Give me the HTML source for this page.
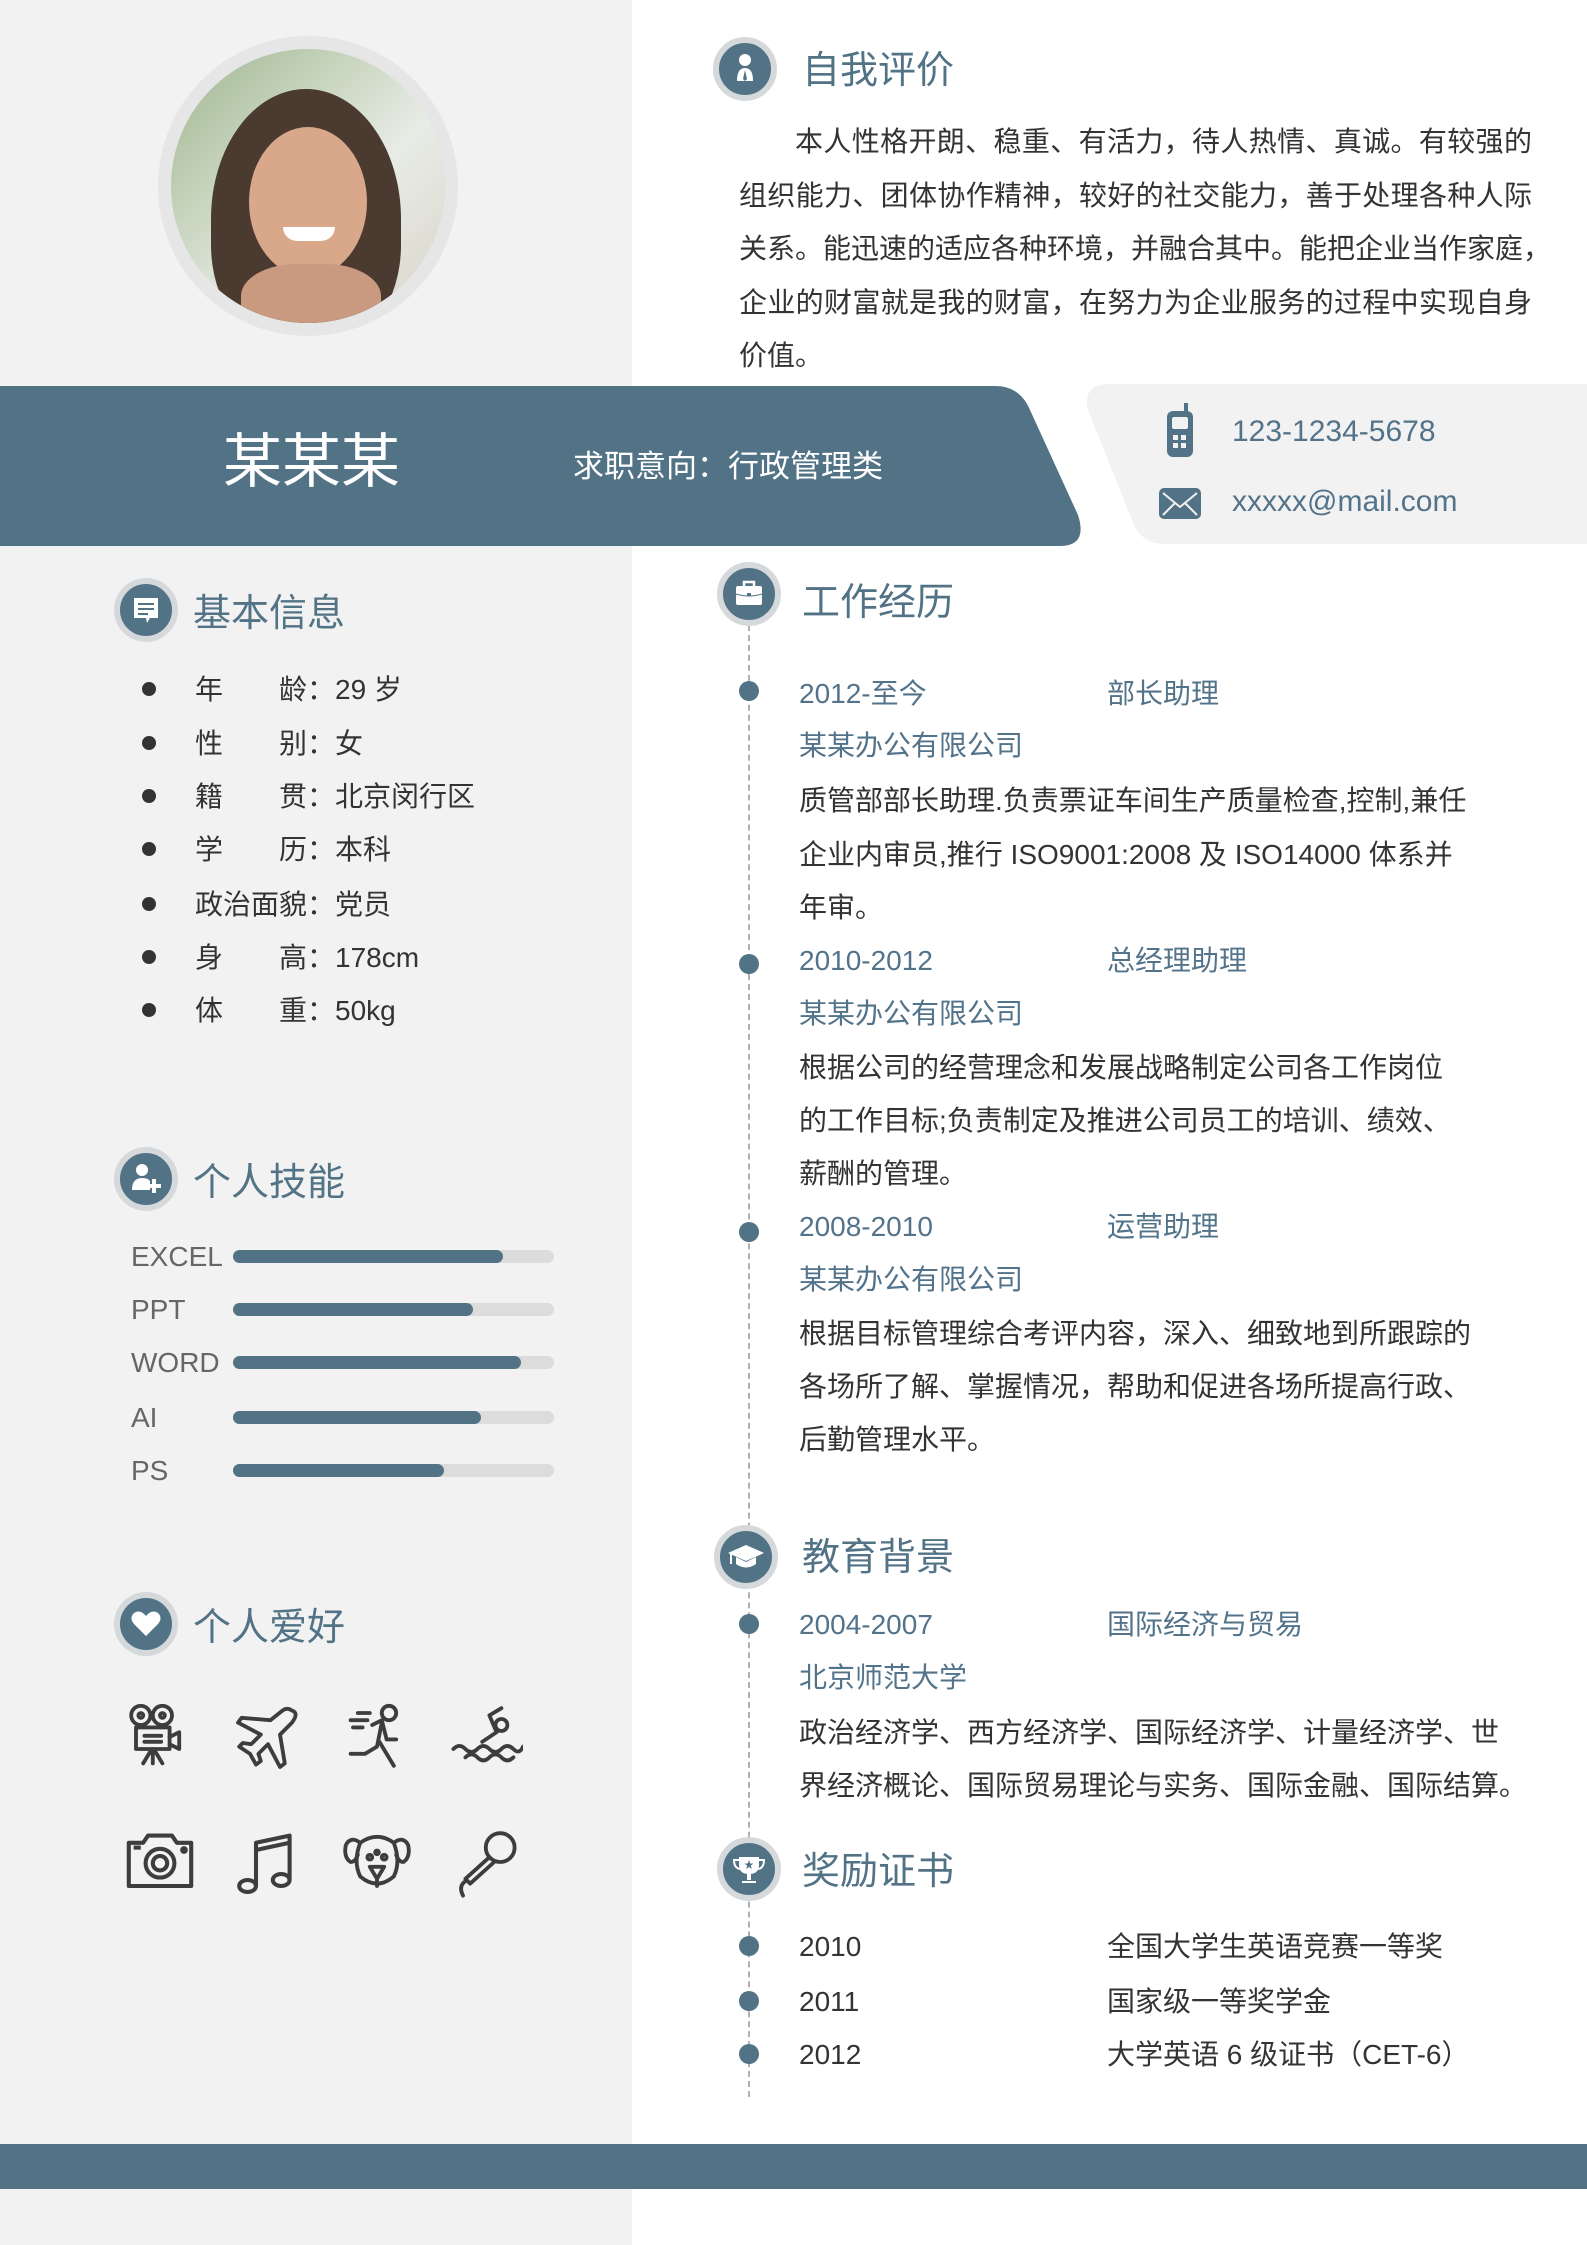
<!DOCTYPE html>
<html><head><meta charset="utf-8">
<style>
*{margin:0;padding:0;box-sizing:border-box}
body{width:1587px;height:2245px;position:relative;background:#fff;font-family:"Liberation Sans","Noto Sans CJK SC",sans-serif;color:#333;overflow:hidden}
.a{position:absolute;white-space:nowrap}
.blue{color:#52738a}
.ttl{font-size:38px;color:#527386;line-height:50px}
.ic{position:absolute;width:64px;height:64px;border-radius:50%;background:#527386;border:6px solid #d6d9db}
.bul{position:absolute;width:14px;height:14px;border-radius:50%;background:#333}
.dot{position:absolute;width:20px;height:20px;border-radius:50%;background:#527386;left:739px}
.t28{font-size:28px;line-height:40px}
.bar{position:absolute;left:233px;width:321px;height:13px;border-radius:7px;background:#dcdcdc}
.bar i{display:block;height:13px;border-radius:7px;background:#527386}
.sk{position:absolute;left:131px;font-size:28px;color:#666;line-height:40px;font-weight:300}
.p{position:absolute;left:739px;width:793px;font-size:28px;line-height:40px;text-align:justify;text-align-last:justify;white-space:nowrap}
.hb{position:absolute;width:72px;height:72px}
</style></head><body>
<div class="a" style="left:0;top:0;width:632px;height:2245px;background:#f2f2f2"></div>

<div class="a" style="left:158px;top:36px;width:300px;height:300px;border-radius:50%;background:#e6e6e6"></div>
<div class="a" style="left:171px;top:49px;width:274px;height:274px;border-radius:50%;overflow:hidden;background:linear-gradient(135deg,#9fb58f 0%,#c9d6c0 35%,#e8ece6 60%,#d8d3c8 100%)">
  <div class="a" style="left:40px;top:40px;width:190px;height:260px;border-radius:50% 50% 40% 40%;background:#4a3a30"></div>
  <div class="a" style="left:78px;top:78px;width:118px;height:150px;border-radius:50%;background:#d9a88a"></div>
  <div class="a" style="left:70px;top:215px;width:140px;height:80px;border-radius:40%;background:#c99a80"></div>
  <div class="a" style="left:112px;top:178px;width:52px;height:14px;border-radius:0 0 20px 20px;background:#fff"></div>
</div>

<div class="ic" style="left:713px;top:37px"><svg width="52" height="52" viewBox="0 0 52 52"><circle cx="26" cy="17" r="6" fill="#fff"/><path d="M18 38 Q18 25 26 25 Q34 25 34 38Z" fill="#fff"/><path d="M26 27 L24 36 L26 38 L28 36Z" fill="#527386"/></svg></div>
<div class="a ttl" style="left:802px;top:46px">自我评价</div>
<div class="p" style="left:795px;width:737px;top:122px">本人性格开朗、稳重、有活力，待人热情、真诚。有较强的</div>
<div class="p" style="top:176px">组织能力、团体协作精神，较好的社交能力，善于处理各种人际</div>
<div class="p" style="top:229px">关系。能迅速的适应各种环境，并融合其中。能把企业当作家庭，</div>
<div class="p" style="top:283px">企业的财富就是我的财富，在努力为企业服务的过程中实现自身</div>
<div class="a t28" style="left:739px;top:336px">价值。</div>

<svg class="a" style="left:0;top:380px" width="1587" height="170" viewBox="0 380 1587 170">
<path d="M0 386 L995 386 Q1020 386 1030 410 L1078 515 Q1088 546 1060 546 L0 546Z" fill="#527386"/>
<path d="M1110 384 L1587 384 L1587 544 L1165 544 Q1140 544 1132 520 L1088 410 Q1082 384 1110 384Z" fill="#f2f2f2"/>
</svg>
<div class="a" style="left:223px;top:424px;font-size:59px;line-height:76px;color:#fff">某某某</div>
<div class="a" style="left:573px;top:447px;font-size:31px;line-height:40px;color:#fff">求职意向：行政管理类</div>
<svg class="a" style="left:1165px;top:403px" width="30" height="54" viewBox="0 0 30 54"><rect x="19" y="0" width="4" height="10" fill="#527386"/><rect x="2" y="8" width="26" height="46" rx="6" fill="#527386"/><rect x="7" y="14" width="16" height="12" rx="2" fill="#f2f2f2"/><rect x="8" y="32" width="5" height="5" fill="#f2f2f2"/><rect x="16" y="32" width="5" height="5" fill="#f2f2f2"/><rect x="8" y="40" width="5" height="5" fill="#f2f2f2"/><rect x="16" y="40" width="5" height="5" fill="#f2f2f2"/></svg>
<div class="a blue" style="left:1232px;top:412px;font-size:30px;line-height:40px">123-1234-5678</div>
<svg class="a" style="left:1159px;top:488px" width="42" height="31" viewBox="0 0 42 31"><rect width="42" height="31" rx="5" fill="#527386"/><path d="M4 5 L21 19 L38 5 M4 27 L16 15 M38 27 L26 15" stroke="#f2f2f2" stroke-width="2" fill="none"/></svg>
<div class="a blue" style="left:1232px;top:482px;font-size:30px;line-height:40px">xxxxx@mail.com</div>

<div class="ic" style="left:114px;top:578px"><svg width="52" height="52" viewBox="0 0 52 52"><path d="M14 14 H38 V34 H30 L27 39 L26 34 H14Z" fill="#fff"/><path d="M18 20H34M18 25H34M18 30H28" stroke="#527386" stroke-width="2"/></svg></div>
<div class="a ttl" style="left:193px;top:589px">基本信息</div>
<div class="bul" style="left:142px;top:682px"></div><div class="a t28" style="left:195px;top:670px">年</div><div class="a t28" style="left:279px;top:670px">龄：29 岁</div>
<div class="bul" style="left:142px;top:736px"></div><div class="a t28" style="left:195px;top:724px">性</div><div class="a t28" style="left:279px;top:724px">别：女</div>
<div class="bul" style="left:142px;top:789px"></div><div class="a t28" style="left:195px;top:777px">籍</div><div class="a t28" style="left:279px;top:777px">贯：北京闵行区</div>
<div class="bul" style="left:142px;top:842px"></div><div class="a t28" style="left:195px;top:830px">学</div><div class="a t28" style="left:279px;top:830px">历：本科</div>
<div class="bul" style="left:142px;top:897px"></div><div class="a t28" style="left:195px;top:885px">政治面貌：党员</div>
<div class="bul" style="left:142px;top:950px"></div><div class="a t28" style="left:195px;top:938px">身</div><div class="a t28" style="left:279px;top:938px">高：178cm</div>
<div class="bul" style="left:142px;top:1003px"></div><div class="a t28" style="left:195px;top:991px">体</div><div class="a t28" style="left:279px;top:991px">重：50kg</div>

<div class="ic" style="left:114px;top:1147px"><svg width="52" height="52" viewBox="0 0 52 52"><circle cx="22" cy="17" r="6" fill="#fff"/><path d="M12 37 Q12 25 22 25 Q28 25 30 28 L30 37Z" fill="#fff"/><path d="M34 26V40M27 33H41" stroke="#fff" stroke-width="4"/></svg></div>
<div class="a ttl" style="left:193px;top:1158px">个人技能</div>
<div class="sk" style="top:1237px">EXCEL</div><div class="bar" style="top:1250px"><i style="width:270px"></i></div>
<div class="sk" style="top:1290px">PPT</div><div class="bar" style="top:1303px"><i style="width:240px"></i></div>
<div class="sk" style="top:1343px">WORD</div><div class="bar" style="top:1356px"><i style="width:288px"></i></div>
<div class="sk" style="top:1398px">AI</div><div class="bar" style="top:1411px"><i style="width:248px"></i></div>
<div class="sk" style="top:1451px">PS</div><div class="bar" style="top:1464px"><i style="width:211px"></i></div>

<div class="ic" style="left:114px;top:1592px"><svg width="52" height="52" viewBox="0 0 52 52"><path d="M26 38 L14 26 Q9 20 14 15 Q20 11 26 18 Q32 11 38 15 Q43 20 38 26Z" fill="#fff"/></svg></div>
<div class="a ttl" style="left:193px;top:1603px">个人爱好</div>
<svg class="hb" style="left:124px;top:1701px" viewBox="0 0 60 60" fill="none" stroke="#3d3d3d" stroke-width="3.2" stroke-linecap="round" stroke-linejoin="round"><circle cx="14" cy="12" r="8"/><circle cx="14" cy="12" r="2"/><circle cx="32" cy="12" r="8"/><circle cx="32" cy="12" r="2"/><path d="M10 22 H38 V40 H10 Z"/><path d="M17 29H31M17 34H31"/><path d="M38 30 L46 26 V40 L38 36"/><path d="M24 40 V52 M16 52 L22 42 M32 52 L26 42"/></svg>
<svg class="hb" style="left:232px;top:1701px" viewBox="0 0 60 60" fill="none" stroke="#3d3d3d" stroke-width="3.2" stroke-linejoin="round"><path d="M50 8 Q56 10 50 18 L40 28 L44 52 L40 55 L30 36 L22 44 L24 50 L20 53 L15 44 L6 38 L9 35 L16 36 L24 28 L5 18 L8 14 L32 16 L42 8 Q46 5 50 8Z"/></svg>
<svg class="hb" style="left:341px;top:1701px" viewBox="0 0 60 60" fill="none" stroke="#3d3d3d" stroke-width="3.2" stroke-linecap="round" stroke-linejoin="round"><circle cx="40" cy="10" r="6"/><path d="M14 10H24M8 16H22M10 22H18"/><path d="M26 20 L34 16 L38 32 L46 32"/><path d="M34 18 L30 38 L20 44 H8"/><path d="M32 34 L44 54"/></svg>
<svg class="hb" style="left:451px;top:1701px" viewBox="0 0 60 60" fill="none" stroke="#3d3d3d" stroke-width="3.2" stroke-linecap="round" stroke-linejoin="round"><circle cx="42" cy="20" r="5"/><path d="M42 6 L32 12 L38 26 L26 34"/><path d="M2 40 Q7 35 12 40 T22 40 T32 40 T42 40 T52 40 T60 38"/><path d="M12 47 Q17 42 22 47 T32 47 T42 47 T52 47"/></svg>
<svg class="hb" style="left:124px;top:1826px" viewBox="0 0 60 60" fill="none" stroke="#3d3d3d" stroke-width="3.4" stroke-linejoin="round"><path d="M4 14 H16 L20 8 H40 L44 14 H56 V50 H4 Z"/><circle cx="30" cy="31" r="12"/><circle cx="30" cy="31" r="6"/><circle cx="50" cy="20" r="1.5" fill="#3d3d3d"/><path d="M8 18H14"/></svg>
<svg class="hb" style="left:232px;top:1826px" viewBox="0 0 60 60" fill="none" stroke="#3d3d3d" stroke-width="3.4" stroke-linejoin="round"><path d="M20 50 V14 L48 8 V44"/><path d="M20 20 L48 14"/><ellipse cx="13" cy="50" rx="7" ry="5"/><ellipse cx="41" cy="45" rx="7" ry="5"/></svg>
<svg class="hb" style="left:341px;top:1826px" viewBox="0 0 60 60" fill="none" stroke="#3d3d3d" stroke-width="3.2" stroke-linecap="round" stroke-linejoin="round"><path d="M16 14 Q8 8 4 16 Q2 26 8 30 Q12 30 14 24"/><path d="M44 14 Q52 8 56 16 Q58 26 52 30 Q48 30 46 24"/><path d="M16 14 Q30 4 44 14 Q50 30 44 42 Q30 54 16 42 Q10 30 16 14Z"/><circle cx="24" cy="26" r="2"/><circle cx="36" cy="26" r="2"/><circle cx="30" cy="22" r="1.5"/><path d="M24 34 H36 L30 44Z"/><path d="M30 44 V50"/></svg>
<svg class="hb" style="left:451px;top:1826px" viewBox="0 0 60 60" fill="none" stroke="#3d3d3d" stroke-width="3.2" stroke-linecap="round" stroke-linejoin="round"><circle cx="41" cy="18" r="12"/><path d="M32 26 L12 44 L16 48 L36 30"/><path d="M12 46 Q6 50 10 58"/></svg>

<div class="a" style="left:748px;top:625px;height:1472px;border-left:2px dashed #b0b0b0"></div>

<div class="ic" style="left:717px;top:562px"><svg width="52" height="52" viewBox="0 0 52 52"><path d="M21 18 V14 H31 V18" stroke="#fff" stroke-width="2.5" fill="none"/><rect x="13" y="18" width="26" height="19" rx="2" fill="#fff"/><path d="M13 26 Q26 30 39 26" stroke="#527386" stroke-width="1" fill="none"/><rect x="24" y="25" width="4" height="3" fill="#527386"/></svg></div>
<div class="a ttl" style="left:802px;top:578px">工作经历</div>

<div class="dot" style="top:681px"></div>
<div class="a t28 blue" style="left:799px;top:674px">2012-至今</div><div class="a t28 blue" style="left:1107px;top:674px">部长助理</div>
<div class="a t28 blue" style="left:799px;top:726px">某某办公有限公司</div>
<div class="a t28" style="left:799px;top:781px">质管部部长助理.负责票证车间生产质量检查,控制,兼任</div>
<div class="a t28" style="left:799px;top:835px">企业内审员,推行 ISO9001:2008 及 ISO14000 体系并</div>
<div class="a t28" style="left:799px;top:888px">年审。</div>

<div class="dot" style="top:954px"></div>
<div class="a t28 blue" style="left:799px;top:941px">2010-2012</div><div class="a t28 blue" style="left:1107px;top:941px">总经理助理</div>
<div class="a t28 blue" style="left:799px;top:994px">某某办公有限公司</div>
<div class="a t28" style="left:799px;top:1048px">根据公司的经营理念和发展战略制定公司各工作岗位</div>
<div class="a t28" style="left:799px;top:1101px">的工作目标;负责制定及推进公司员工的培训、绩效、</div>
<div class="a t28" style="left:799px;top:1154px">薪酬的管理。</div>

<div class="dot" style="top:1222px"></div>
<div class="a t28 blue" style="left:799px;top:1207px">2008-2010</div><div class="a t28 blue" style="left:1107px;top:1207px">运营助理</div>
<div class="a t28 blue" style="left:799px;top:1260px">某某办公有限公司</div>
<div class="a t28" style="left:799px;top:1314px">根据目标管理综合考评内容，深入、细致地到所跟踪的</div>
<div class="a t28" style="left:799px;top:1367px">各场所了解、掌握情况，帮助和促进各场所提高行政、</div>
<div class="a t28" style="left:799px;top:1420px">后勤管理水平。</div>

<div class="ic" style="left:714px;top:1525px"><svg width="52" height="52" viewBox="0 0 52 52"><path d="M8 22 L26 14 L44 22 L26 30Z" fill="#fff"/><path d="M16 26 V33 Q26 40 36 33 V26 L26 31Z" fill="#fff"/><path d="M11 23 V33" stroke="#fff" stroke-width="2"/></svg></div>
<div class="a ttl" style="left:802px;top:1533px">教育背景</div>
<div class="dot" style="top:1614px"></div>
<div class="a t28 blue" style="left:799px;top:1605px">2004-2007</div><div class="a t28 blue" style="left:1107px;top:1605px">国际经济与贸易</div>
<div class="a t28 blue" style="left:799px;top:1658px">北京师范大学</div>
<div class="a t28" style="left:799px;top:1713px">政治经济学、西方经济学、国际经济学、计量经济学、世</div>
<div class="a t28" style="left:799px;top:1766px">界经济概论、国际贸易理论与实务、国际金融、国际结算。</div>

<div class="ic" style="left:717px;top:1837px"><svg width="52" height="52" viewBox="0 0 52 52"><path d="M16 14 H36 V22 Q36 31 26 31 Q16 31 16 22Z" fill="#fff"/><path d="M16 17 H11 Q11 25 17 26 M36 17 H41 Q41 25 35 26" stroke="#fff" stroke-width="2" fill="none"/><path d="M24 31 H28 V37 H24Z M19 38 H33 V40 H19Z" fill="#fff"/><path d="M26 17 L27.2 20.5 L30.5 20.5 L27.8 22.6 L28.8 26 L26 24 L23.2 26 L24.2 22.6 L21.5 20.5 L24.8 20.5Z" fill="#527386"/></svg></div>
<div class="a ttl" style="left:802px;top:1847px">奖励证书</div>
<div class="dot" style="top:1936px"></div><div class="a t28" style="left:799px;top:1927px">2010</div><div class="a t28" style="left:1107px;top:1927px">全国大学生英语竞赛一等奖</div>
<div class="dot" style="top:1991px"></div><div class="a t28" style="left:799px;top:1982px">2011</div><div class="a t28" style="left:1107px;top:1982px">国家级一等奖学金</div>
<div class="dot" style="top:2044px"></div><div class="a t28" style="left:799px;top:2035px">2012</div><div class="a t28" style="left:1107px;top:2035px">大学英语 6 级证书（CET-6）</div>

<div class="a" style="left:0;top:2144px;width:1587px;height:45px;background:#527386"></div>
</body></html>
